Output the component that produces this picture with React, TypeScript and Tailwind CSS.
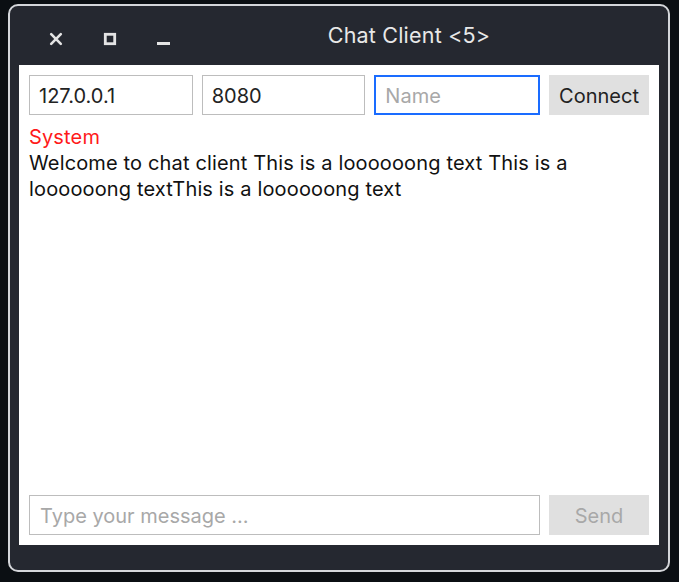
import React from "react";

const font = { fontFamily: "Inter, 'Noto Sans', sans-serif" };

function TitleButtons() {
  return (
    <div className="flex items-center h-full w-[170px] pl-[30px] pt-[6px]">
      {/* Close */}
      <svg width="14" height="14" viewBox="0 0 14 14">
        <path d="M2.2 2.2 L11.8 11.8 M11.8 2.2 L2.2 11.8" stroke="#e4e4e4" strokeWidth="2.6" strokeLinecap="round" />
      </svg>
      {/* Maximize */}
      <svg width="14" height="14" viewBox="0 0 14 14" className="ml-[40px]">
        <rect x="2.3" y="2.3" width="9.4" height="9.4" fill="none" stroke="#e4e4e4" strokeWidth="2.8" />
      </svg>
      {/* Minimize */}
      <svg width="14" height="14" viewBox="0 0 14 14" className="ml-[39px] mt-[10px]">
        <rect x="1" y="5" width="13" height="3" fill="#e4e4e4" />
      </svg>
    </div>
  );
}

export default function App() {
  return (
    <div
      className="w-[679px] h-[582px] bg-[#0b0f13] pt-[4px] pl-[8px] overflow-hidden flex"
      style={font}
    >
      <div className="w-[662px] h-[568px] rounded-[10px] border-2 border-[#d4d6da] bg-[#252830] flex flex-col px-[9px] pb-[25px]">
        {/* Title bar */}
        <div className="h-[59px] flex items-center shrink-0">
          <TitleButtons />
          <div className="flex-1 text-center text-[21.5px] tracking-[0.2px] text-[#e8e8e8] pr-[30px] -mt-[1px]">
            Chat Client &lt;5&gt;
          </div>
        </div>

        {/* Content */}
        <div className="flex-1 bg-white flex flex-col p-[10px]">
          <div className="flex gap-[9px] h-[40px]">
            <input
              defaultValue="127.0.0.1"
              className="flex-1 min-w-0 border border-[#bdbdbd] px-[9px] pt-[1px] text-[20px] text-[#222] outline-none"
              style={font}
            />
            <input
              defaultValue="8080"
              className="flex-1 min-w-0 border border-[#bdbdbd] px-[9px] pt-[1px] text-[20px] text-[#222] outline-none"
              style={font}
            />
            <input
              placeholder="Name"
              className="flex-1 min-w-0 border-2 border-[#1a6cff] px-[9px] pt-[1px] text-[20px] text-[#222] placeholder:text-[#a8a8a8] outline-none"
              style={font}
            />
            <button className="w-[100px] bg-[#e0e0e0] pt-[1px] text-[20px] text-[#222]" style={font}>
              Connect
            </button>
          </div>

          <div className="mt-[9px] text-[20px] leading-[26px] tracking-[0.15px]">
            <div className="text-[#ff1a1a]">System</div>
            <div className="text-[#111]">
              Welcome to chat client This is a loooooong text This is a loooooong textThis is a loooooong text
            </div>
          </div>

          <div className="flex-1" />

          <div className="flex gap-[9px] h-[40px]">
            <input
              placeholder="Type your message ..."
              className="flex-1 min-w-0 border border-[#bdbdbd] px-[10px] pt-[1px] text-[20px] text-[#222] placeholder:text-[#a8a8a8] outline-none"
              style={font}
            />
            <button className="w-[100px] bg-[#e0e0e0] pt-[1px] text-[20px] text-[#a8a8a8]" style={font}>
              Send
            </button>
          </div>
        </div>
      </div>
    </div>
  );
}
